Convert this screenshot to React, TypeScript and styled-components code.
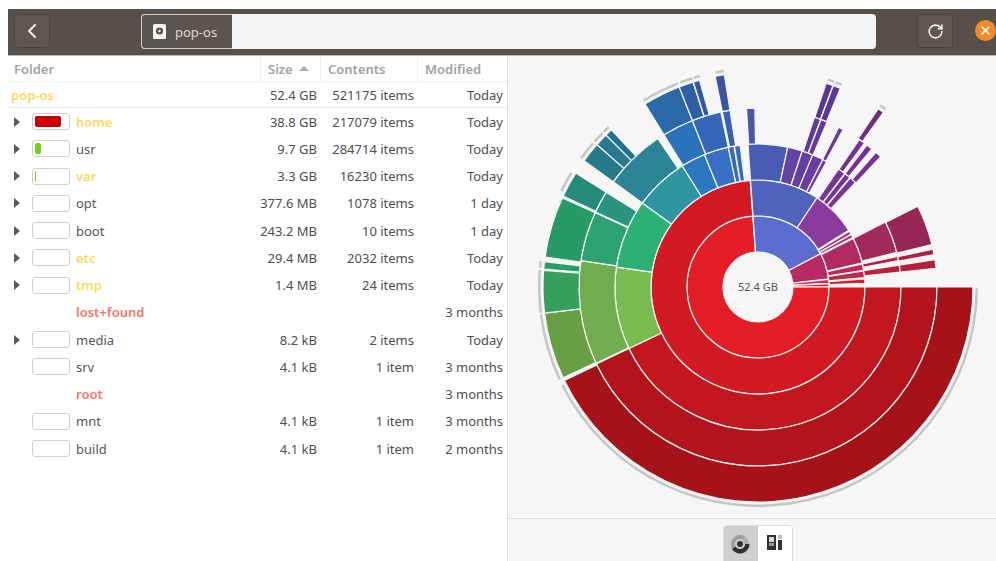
import React from "react";
import styled, { createGlobalStyle } from "styled-components";
import { ChevronLeft, RotateCw, X } from "lucide-react";

const GlobalStyle = createGlobalStyle`
  html, body { margin: 0; padding: 0; background: #fff; overflow: hidden; }
  * { box-sizing: border-box; }
`;

const Shell = styled.div`
  width: 996px;
  height: 561px;
  padding: 9px 0 0 8px;
  font-family: "Noto Sans", "Liberation Sans", sans-serif;
  font-size: 13px;
  overflow: hidden;
`;

const Window = styled.div`
  width: 988px;
  height: 552px;
  display: flex;
  flex-direction: column;
`;

const HeaderBar = styled.header`
  height: 47px;
  flex: none;
  background: #57504a;
  border-bottom: 1px solid #bdb9b4;
  display: flex;
  align-items: flex-start;
  padding: 5px 0 0 6px;
`;

const ToolButton = styled.button`
  width: 36px;
  height: 34px;
  padding: 0;
  border: 1px solid #4a443f;
  border-radius: 4px;
  background: #5f5852;
  color: #f4f2f0;
  display: flex;
  align-items: center;
  justify-content: center;
`;

const PathEntry = styled.div`
  width: 735px;
  height: 35px;
  margin: 0 41px 0 91px;
  border-radius: 4px;
  background: #f5f5f5;
  display: flex;
  overflow: hidden;
`;

const PathCrumb = styled.div`
  width: 91px;
  height: 35px;
  background: #5c554f;
  border: 1px solid #d0ccc8;
  border-right: none;
  border-radius: 4px 0 0 4px;
  color: #dcd9d6;
  display: flex;
  align-items: center;
  padding-left: 11px;
  gap: 9px;
`;

const CloseDot = styled.div`
  width: 21px;
  height: 21px;
  margin: 6px 0 0 22px;
  border-radius: 50%;
  background: #f58b27;
  color: #fff;
  display: flex;
  align-items: center;
  justify-content: center;
`;

const Body = styled.div`
  flex: 1;
  min-height: 0;
  display: flex;
`;

const TreePane = styled.section`
  width: 500px;
  flex: none;
  background: #fff;
  border-right: 1px solid #dcdcdc;
`;

const HeadRow = styled.div`
  display: grid;
  grid-template-columns: 252px 60px 97px 90px;
  height: 26px;
  border-bottom: 1px solid #f0f0f0;
`;

const HeadCell = styled.div<{ $first?: boolean }>`
  display: flex;
  align-items: center;
  gap: 6px;
  padding-left: ${(p) => (p.$first ? 6 : 7)}px;
  border-left: ${(p) => (p.$first ? "none" : "1px solid #f0f0f0")};
  color: #a2a2a2;
  font-weight: 600;
`;

const SortArrow = styled.span`
  width: 0;
  height: 0;
  border-left: 5px solid transparent;
  border-right: 5px solid transparent;
  border-bottom: 5px solid #a8a8a8;
`;

const Row = styled.div<{ $root?: boolean }>`
  display: grid;
  grid-template-columns: 252px 60px 97px 90px;
  height: ${(p) => (p.$root ? "26px" : "27.25px")};
  align-items: center;
  color: #4e4e4e;
  border-bottom: ${(p) => (p.$root ? "1px solid #e6e6e6" : "none")};
`;

const NameCell = styled.div<{ $root?: boolean }>`
  display: flex;
  align-items: center;
  padding-left: ${(p) => (p.$root ? 3 : 6)}px;
`;

const Expander = styled.span<{ $shown: boolean }>`
  width: 18px;
  flex: none;
  height: 10px;
  &::before {
    content: "";
    display: ${(p) => (p.$shown ? "block" : "none")};
    width: 0;
    height: 0;
    margin-top: 0;
    border-top: 5px solid transparent;
    border-bottom: 5px solid transparent;
    border-left: 6px solid #5a5a5a;
  }
`;

const UsageBar = styled.span<{ $hidden?: boolean }>`
  width: 38px;
  height: 17px;
  flex: none;
  margin-right: 6px;
  padding: 2px;
  border: 1px solid ${(p) => (p.$hidden ? "transparent" : "#cfcfcf")};
  border-radius: 3px;
  background: ${(p) => (p.$hidden ? "transparent" : "#fff")};
`;

const UsageFill = styled.span<{ $color: string }>`
  display: block;
  height: 100%;
  border-radius: 2px;
  background: ${(p) => p.$color};
`;

const tones = { plain: "#55555b", warm: "#ffd95e", alert: "#f5766c" };

const Name = styled.span<{ $tone: keyof typeof tones }>`
  color: ${(p) => tones[p.$tone]};
  font-weight: ${(p) => (p.$tone === "plain" ? 400 : 600)};
`;

const NumCell = styled.div<{ $pad: number }>`
  text-align: right;
  padding-right: ${(p) => p.$pad}px;
  white-space: nowrap;
`;

const ChartPane = styled.section`
  flex: 1;
  min-width: 0;
  background: #f6f6f6;
  display: flex;
  flex-direction: column;
`;

const ChartStage = styled.div`
  position: relative;
  height: 463px;
  flex: none;
  border-bottom: 1px solid #dedede;
`;

const ChartSvg = styled.svg`
  display: block;
`;

const CenterLabel = styled.div`
  position: absolute;
  left: 200px;
  top: 222px;
  width: 100px;
  text-align: center;
  font-size: 11px;
  line-height: 18px;
  color: #55555b;
`;

const ViewBar = styled.div`
  flex: 1;
  display: flex;
  justify-content: center;
  padding: 6px 0 0 0;
  margin-left: 12px;
`;

const ViewSwitch = styled.div`
  width: 70px;
  height: 40px;
  display: flex;
  border: 1px solid #dcdcdc;
  border-radius: 4px;
  overflow: hidden;
`;

const ViewOption = styled.div<{ $active?: boolean }>`
  flex: 1;
  background: ${(p) => (p.$active ? "#cfcfcf" : "#fff")};
  display: flex;
  justify-content: center;
  padding-top: 9px;
`;

const CX = 250;
const CY = 231;
const RINGS = [35, 71, 107, 143, 179, 215];

// Annular sector, angles in degrees clockwise from east.
function sector(r0: number, r1: number, a0: number, a1: number, cx = CX, cy = CY) {
  const rad = (d: number) => (d * Math.PI) / 180;
  const pt = (r: number, a: number) =>
    `${(cx + r * Math.cos(rad(a))).toFixed(2)} ${(cy + r * Math.sin(rad(a))).toFixed(2)}`;
  const large = a1 - a0 > 180 ? 1 : 0;
  return `M${pt(r0, a0)} A${r0} ${r0} 0 ${large} 1 ${pt(r0 + 0 * r1, a0) && pt(r0, a1)} L${pt(r1, a1)} A${r1} ${r1} 0 ${large} 0 ${pt(r1, a0)} Z`;
}

type Seg = [ring: number, start: number, end: number, color: string];

const segments: Seg[] = [
  // reds
  [0, 0, 265.8, "#e21d26"],
  [1, 0, 265.8, "#d11a22"],
  [2, 0, 154.5, "#c3171f"],
  [3, 0, 154.5, "#b3141c"],
  [4, 0, 154.2, "#a51318"],
  // greens
  [2, 154.5, 188, "#78bb50"],
  [3, 154.8, 188.5, "#6fad4e"],
  [4, 155, 173, "#689f45"],
  [4, 173, 184.4, "#359f5c"],
  [4, 184.8, 186.8, "#2a9d66"],
  [2, 188, 216, "#2db075"],
  [3, 188.5, 204.5, "#2ba270"],
  [3, 204.8, 212, "#2a947f"],
  [4, 188, 204.5, "#289a65"],
  [4, 205, 212, "#258b78"],
  // teals
  [2, 216, 238, "#2f95a0"],
  [3, 216, 236, "#2b8596"],
  [4, 216, 221.5, "#26798a"],
  [4, 221.5, 225, "#26798f"],
  [4, 225, 227, "#207091"],
  // blues
  [2, 238, 248, "#2c78c0"],
  [2, 248, 258, "#3870c5"],
  [2, 258, 260.3, "#3a68bd"],
  [2, 260.5, 262.8, "#3a68bd"],
  [3, 238.3, 248.5, "#2a72ba"],
  [3, 248.5, 258, "#3466b8"],
  [3, 258.5, 261, "#3a60b0"],
  [4, 238.3, 248.5, "#2a68a8"],
  [4, 248.5, 252.4, "#2e5fa6"],
  [4, 252.5, 254.2, "#3358a4"],
  [4, 258.5, 261, "#3a55a3"],
  [3, 266.3, 269, "#4558a8"],
  // indigo and violet
  [0, 266, 332, "#5b6dcf"],
  [1, 266, 303.5, "#4f63bd"],
  [2, 266, 282, "#4a5bb3"],
  [2, 282, 288, "#6044a6"],
  [2, 288, 292.5, "#663fa3"],
  [2, 292.5, 297, "#6c3da0"],
  [2, 297, 298.7, "#6f3c9d"],
  [3, 288.4, 290.5, "#5e3b9b"],
  [3, 290.6, 292.7, "#643a9a"],
  [3, 296.8, 298.4, "#6f3697"],
  [4, 288.5, 290.4, "#58378f"],
  [4, 290.5, 292.5, "#5b3693"],
  [1, 303.5, 328, "#8a3a9e"],
  [2, 304.3, 307.4, "#73359a"],
  [2, 307.6, 310, "#763398"],
  [2, 310.2, 313, "#7a3397"],
  [3, 304.5, 306.5, "#743393"],
  [3, 307.5, 309.5, "#77318f"],
  [3, 311.2, 313.3, "#7b318f"],
  [4, 304, 305.7, "#702c86"],
  // magentas down to the east
  [1, 328.6, 330.4, "#a8306e"],
  [1, 330.6, 332.4, "#ae2d68"],
  [0, 332, 353.5, "#b92a63"],
  [1, 333, 347, "#b02c60"],
  [2, 333, 346, "#a22a5a"],
  [3, 333.2, 346.3, "#962655"],
  [1, 347.6, 351, "#bc2a50"],
  [1, 351.4, 355, "#c22747"],
  [1, 355.6, 358, "#c9222f"],
  [2, 347.6, 349.4, "#b4223f"],
  [3, 347.8, 349.6, "#ae2140"],
  [2, 351.2, 354, "#bb2038"],
  [3, 351.2, 354, "#b41f3c"],
  [0, 353.8, 357, "#c82c58"],
  [0, 357.2, 359.6, "#d2263f"],
];

// Thin grey caps on the deepest slices.
const caps: [number, number][] = [
  [0.3, 153.4],
  [155, 172.8],
  [173.2, 184.4],
  [185, 186.8],
  [206, 211.5],
  [216, 221],
  [221.6, 224.8],
  [225.2, 227],
  [238.5, 248.6],
  [249.2, 252.6],
  [253, 254.6],
  [258.8, 261],
  [288.6, 290.3],
  [290.7, 292.4],
  [304, 305.6],
];

function Sunburst() {
  return (
    <ChartSvg width="488" height="462" viewBox="0 0 488 462">
      {segments.map(([ring, a0, a1, color], i) => (
        <path
          key={i}
          d={sector(RINGS[ring], RINGS[ring + 1], a0, a1)}
          fill={color}
          stroke="#f6f6f6"
          strokeWidth="1.2"
          strokeLinejoin="round"
        />
      ))}
      {caps.map(([a0, a1], i) => (
        <path key={i} d={sector(217.5, 220, a0, a1)} fill="#c6c6c6" />
      ))}
    </ChartSvg>
  );
}

function DriveGlyph() {
  return (
    <svg width="13" height="15" viewBox="0 0 13 15">
      <rect x="0" y="0" width="13" height="15" rx="1.5" fill="#f4f4f4" />
      <circle cx="6.5" cy="7" r="3.6" fill="#5c554f" />
      <circle cx="6.5" cy="7" r="1.2" fill="#f4f4f4" />
    </svg>
  );
}

function RingGlyph() {
  return (
    <svg width="20" height="20" viewBox="0 0 20 20">
      <circle cx="9" cy="9" r="3" fill="#303030" />
      <path d={sector(4.5, 9, 300, 360, 9, 9)} fill="#b0b0b0" />
      <path d={sector(5, 9.5, 0, 150, 9, 9)} fill="#303030" />
      <path d={sector(5, 9, 150, 300, 9, 9)} fill="#a0a0a0" />
    </svg>
  );
}

function SplitGlyph() {
  return (
    <svg width="16" height="16" viewBox="0 0 16 16">
      <rect x="0" y="0" width="9" height="15" fill="#333" />
      <rect x="2" y="2" width="5" height="5" fill="#ddd" />
      <rect x="2" y="8" width="5" height="3" fill="#999" />
      <rect x="11" y="0" width="4" height="4" fill="#bbb" />
      <rect x="11" y="5" width="4" height="10" fill="#333" />
    </svg>
  );
}

type Item = {
  name: string;
  tone: keyof typeof tones;
  size?: string;
  count?: string;
  when: string;
  kids?: boolean;
  bar?: boolean;
  fill?: number;
  fillColor?: string;
};

const items: Item[] = [
  { name: "home", tone: "warm", size: "38.8 GB", count: "217079 items", when: "Today", kids: true, bar: true, fill: 26, fillColor: "#cc0000" },
  { name: "usr", tone: "plain", size: "9.7 GB", count: "284714 items", when: "Today", kids: true, bar: true, fill: 6, fillColor: "#73d216" },
  { name: "var", tone: "warm", size: "3.3 GB", count: "16230 items", when: "Today", kids: true, bar: true, fill: 1, fillColor: "#73d216" },
  { name: "opt", tone: "plain", size: "377.6 MB", count: "1078 items", when: "1 day", kids: true, bar: true },
  { name: "boot", tone: "plain", size: "243.2 MB", count: "10 items", when: "1 day", kids: true, bar: true },
  { name: "etc", tone: "warm", size: "29.4 MB", count: "2032 items", when: "Today", kids: true, bar: true },
  { name: "tmp", tone: "warm", size: "1.4 MB", count: "24 items", when: "Today", kids: true, bar: true },
  { name: "lost+found", tone: "alert", when: "3 months" },
  { name: "media", tone: "plain", size: "8.2 kB", count: "2 items", when: "Today", kids: true, bar: true },
  { name: "srv", tone: "plain", size: "4.1 kB", count: "1 item", when: "3 months", bar: true },
  { name: "root", tone: "alert", when: "3 months" },
  { name: "mnt", tone: "plain", size: "4.1 kB", count: "1 item", when: "3 months", bar: true },
  { name: "build", tone: "plain", size: "4.1 kB", count: "1 item", when: "2 months", bar: true },
];

export default function App() {
  return (
    <Shell>
      <GlobalStyle />
      <Window>
        <HeaderBar>
          <ToolButton aria-label="Back">
            <ChevronLeft size={24} strokeWidth={2} />
          </ToolButton>
          <PathEntry>
            <PathCrumb>
              <DriveGlyph />
              pop-os
            </PathCrumb>
          </PathEntry>
          <ToolButton aria-label="Reload">
            <RotateCw size={17} strokeWidth={2.2} />
          </ToolButton>
          <CloseDot>
            <X size={13} strokeWidth={3.2} />
          </CloseDot>
        </HeaderBar>
        <Body>
          <TreePane>
            <HeadRow>
              <HeadCell $first>Folder</HeadCell>
              <HeadCell>
                Size
                <SortArrow />
              </HeadCell>
              <HeadCell>Contents</HeadCell>
              <HeadCell>Modified</HeadCell>
            </HeadRow>
            <Row $root>
              <NameCell $root>
                <Name $tone="warm">pop-os</Name>
              </NameCell>
              <NumCell $pad={3}>52.4 GB</NumCell>
              <NumCell $pad={3}>521175 items</NumCell>
              <NumCell $pad={4}>Today</NumCell>
            </Row>
            {items.map((it) => (
              <Row key={it.name}>
                <NameCell>
                  <Expander $shown={!!it.kids} />
                  <UsageBar $hidden={!it.bar}>
                    {it.fill ? (
                      <UsageFill $color={it.fillColor!} style={{ width: it.fill }} />
                    ) : null}
                  </UsageBar>
                  <Name $tone={it.tone}>{it.name}</Name>
                </NameCell>
                <NumCell $pad={3}>{it.size}</NumCell>
                <NumCell $pad={3}>{it.count}</NumCell>
                <NumCell $pad={4}>{it.when}</NumCell>
              </Row>
            ))}
          </TreePane>
          <ChartPane>
            <ChartStage>
              <Sunburst />
              <CenterLabel>52.4 GB</CenterLabel>
            </ChartStage>
            <ViewBar>
              <ViewSwitch>
                <ViewOption $active>
                  <RingGlyph />
                </ViewOption>
                <ViewOption>
                  <SplitGlyph />
                </ViewOption>
              </ViewSwitch>
            </ViewBar>
          </ChartPane>
        </Body>
      </Window>
    </Shell>
  );
}
